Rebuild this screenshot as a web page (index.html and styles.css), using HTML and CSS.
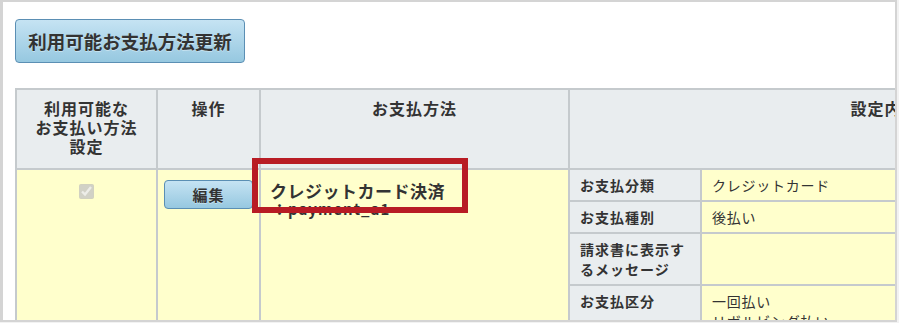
FILE: index.html
```html
<!DOCTYPE html>
<html>
<head>
  <meta charset="utf-8">
  <title>お支払方法設定</title>
  <link rel="stylesheet" href="styles.css">
</head>
<body>
  <div class="frame">
    <div class="page">
      <button class="btn btn-update">利用可能お支払方法更新</button>

      <table class="pay-table">
        <colgroup>
          <col class="col-use">
          <col class="col-op">
          <col class="col-name">
          <col class="col-detail">
        </colgroup>
        <thead>
          <tr>
            <th>利用可能な<br>お支払い方法<br>設定</th>
            <th>操作</th>
            <th>お支払方法</th>
            <th>設定内容</th>
          </tr>
        </thead>
        <tbody>
          <tr>
            <td class="cell-check"><input type="checkbox" checked disabled></td>
            <td class="cell-op"><button class="btn btn-edit">編集</button></td>
            <td class="cell-name">
              <div class="pay-name">クレジットカード決済</div>
              <div class="pay-code">：payment_a1</div>
            </td>
            <td class="cell-detail">
              <table class="detail-table">
                <tr>
                  <th>お支払分類</th>
                  <td>クレジットカード</td>
                </tr>
                <tr>
                  <th>お支払種別</th>
                  <td>後払い</td>
                </tr>
                <tr>
                  <th>請求書に表示す<br>るメッセージ</th>
                  <td></td>
                </tr>
                <tr>
                  <th>お支払区分</th>
                  <td>一回払い<br>リボルビング払い</td>
                </tr>
                <tr>
                  <th>手数料</th>
                  <td>0円</td>
                </tr>
              </table>
            </td>
          </tr>
        </tbody>
      </table>
    </div>

    <!-- 注目枠 -->
    <div class="highlight"></div>
  </div>
</body>
</html>
```

FILE: styles.css
```css
body {
  margin: 0;
  background: #f2f2f2;
  font-family: "Noto Sans CJK JP", "Noto Sans", sans-serif;
  color: #333;
}

.frame {
  position: relative;
  width: 897px;
  height: 322px;
  box-sizing: border-box;
  border: 2px solid #d4d4d4;
  border-left-width: 3px;
  background: white;
  overflow: hidden;
}

.page {
  padding: 17px 0 0 12px;
}

.btn {
  font-family: inherit;
  color: #333;
  font-weight: bold;
  background: linear-gradient(#c5e3f3, #96c8e0);
  border: 1px solid #5b8fb4;
  border-radius: 4px;
  cursor: pointer;
  padding: 0;
  text-shadow: 0 1px 0 rgba(255, 255, 255, 0.4);
}

.btn-update {
  display: block;
  width: 230px;
  height: 44px;
  font-size: 18.5px;
  letter-spacing: 0;
}

.pay-table {
  margin-top: 25px;
  border-collapse: collapse;
  table-layout: fixed;
  width: 1184px;
}

.col-use { width: 141px; }
.col-op { width: 103px; }
.col-name { width: 309px; }
.col-detail { width: 631px; }

.pay-table > thead > tr > th,
.pay-table > tbody > tr > td {
  border: 2px solid #c5cacd;
  vertical-align: top;
}

.pay-table > thead > tr > th {
  background: #e9edef;
  height: 80px;
  box-sizing: border-box;
  padding: 9px 4px 0;
  font-size: 16px;
  letter-spacing: 1px;
  line-height: 19px;
  text-align: center;
}

.pay-table > tbody > tr > td {
  background: #ffffcc;
  height: 240px;
}

.cell-check {
  text-align: center;
  padding-top: 10px;
}

.cell-check input {
  width: 15px;
  height: 15px;
  margin: 0;
}

.cell-op {
  padding: 10px 4px 0 6px;
}

.btn-edit {
  display: block;
  width: 89px;
  height: 29px;
  font-size: 15px;
  letter-spacing: 1px;
}

.cell-name {
  padding: 11px 9px 0;
}

.pay-name {
  font-size: 17px;
  font-weight: bold;
  letter-spacing: 0.5px;
  line-height: 20px;
}

.pay-code {
  font-size: 15px;
  font-weight: bold;
  letter-spacing: 1px;
  line-height: 16px;
  padding-left: 2px;
}

.pay-table > tbody > tr > td.cell-detail {
  padding: 0;
}

.detail-table {
  width: 100%;
  border-collapse: collapse;
  border-style: hidden;
}

.detail-table th,
.detail-table td {
  border: 2px solid #c5cacd;
  padding: 5px 10px;
  font-size: 14px;
  letter-spacing: 1px;
  line-height: 20px;
  text-align: left;
  vertical-align: top;
}

.detail-table th {
  width: 110px;
  background: #e9edef;
}

.detail-table td {
  font-weight: normal;
  letter-spacing: 0.75px;
}

.highlight {
  position: absolute;
  left: 249px;
  top: 156px;
  width: 216px;
  height: 55px;
  box-sizing: border-box;
  border: 6px solid #b81c24;
}
```
